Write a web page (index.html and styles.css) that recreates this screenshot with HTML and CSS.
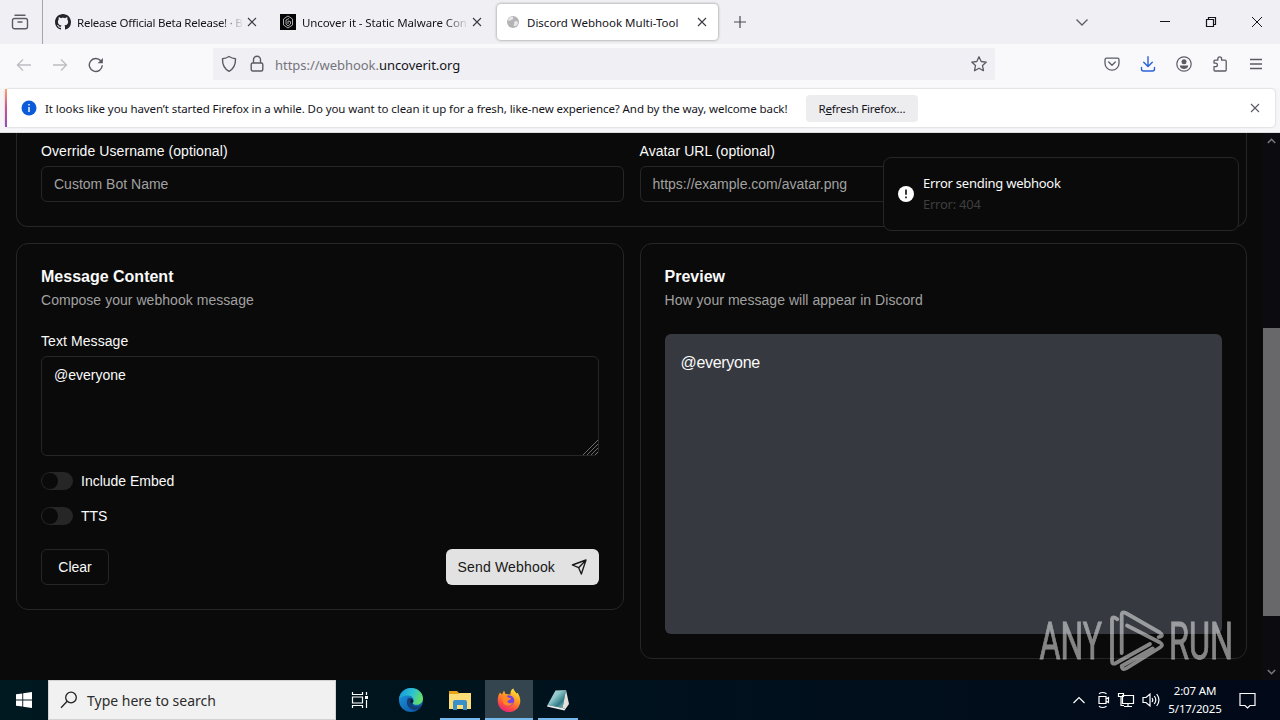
FILE: index.html
```
<!DOCTYPE html>
<html lang="en">
<head>
  <meta charset="utf-8">
  <title>Discord Webhook Multi-Tool</title>
  <link rel="stylesheet" href="styles.css">
</head>
<body>
  <!-- Tabs -->
  <div class="tab-bar">
    <div class="view-button">
      <svg width="18" height="18" viewBox="0 0 18 18" fill="none" stroke="#5b5b66" stroke-width="1.4"><path d="M4 2.2h10M3.5 5.5h11a2 2 0 0 1 2 2v6.3a2 2 0 0 1-2 2h-11a2 2 0 0 1-2-2V7.500a2 2 0 0 1 2-2zM7 9h4" stroke-linecap="round"/></svg>
    </div>
    <div class="tabs">
      <div class="tab">
        <svg width="16" height="16" viewBox="0 0 16 16" fill="#24242c"><path d="M8 0C3.580 0 0 3.580 0 8c0 3.540 2.290 6.530 5.470 7.590.4.070.550-.170.550-.380 0-.190-.010-.820-.010-1.490-2.010.370-2.530-.490-2.690-.940-.090-.230-.480-.940-.820-1.130-.280-.150-.680-.520-.010-.530.630-.010 1.080.580 1.230.820.720 1.210 1.870.870 2.330.660.070-.520.280-.870.510-1.070-1.780-.2-3.640-.890-3.640-3.950 0-.870.310-1.590.820-2.150-.080-.2-.360-1.020.080-2.120 0 0 .670-.210 2.200.820.640-.180 1.320-.270 2-.270s1.360.090 2 .270c1.530-1.040 2.200-.820 2.200-.820.440 1.100.160 1.920.080 2.120.510.560.820 1.270.820 2.150 0 3.070-1.870 3.750-3.650 3.950.290.250.540.730.540 1.480 0 1.070-.010 1.930-.010 2.200 0 .210.150.460.550.380A8 8 0 0 0 16 8c0-4.420-3.580-8-8-8z"/></svg>
        <span class="tab-title faded release-title">Release Official Beta Release! · B</span>
        <svg class="tab-close" width="10" height="10" viewBox="0 0 10 10"><path d="M1 1l8 8M9 1l-8 8"/></svg>
      </div>
      <div class="tab">
        <svg width="16" height="16" viewBox="0 0 16 16"><path fill="#050505" d="M0 0h16v16H0z"/><path d="M8 2l4.500 3v6L8 14l-4.500-3V5zM9 4.500L6 6v4l2 2 2.500-2V7.500L8 7v3" fill="none" stroke="#aaa"/></svg>
        <span class="tab-title faded">Uncover it - Static Malware Con</span>
        <svg class="tab-close" width="10" height="10" viewBox="0 0 10 10"><path d="M1 1l8 8M9 1l-8 8"/></svg>
      </div>
      <div class="tab active">
        <svg width="16" height="16" viewBox="0 0 16 16"><circle cx="8" cy="8" r="6" fill="#b4b4b6"/><path d="M3 6c1-3 4-4 5-3 1 2-1 3-2 3s-1 2-3 0zM9 8c2-2 4-1 4 1s-3 4-4 3 1-2 0-4z" fill="#e6e6e8"/></svg>
        <span class="tab-title">Discord Webhook Multi-Tool</span>
        <svg class="tab-close" width="10" height="10" viewBox="0 0 10 10"><path d="M1 1l8 8M9 1l-8 8"/></svg>
      </div>
    </div>
    <svg class="new-tab" width="12" height="12" viewBox="0 0 12 12"><path d="M6 0v12M0 6h12"/></svg>
    <div class="window-buttons">
      <svg width="14" height="14" viewBox="0 0 14 14" fill="none" stroke="#5b5b66" stroke-width="1.300"><path d="M1.500 4.500L7 10l5.500-5.500"/></svg>
      <svg class="minimize" width="12" height="12" viewBox="0 0 12 12"><path d="M1 5.500h10" stroke="#15141a"/></svg>
      <svg width="12" height="12" viewBox="0 0 12 12" fill="none" stroke="#15141a" stroke-width="1.200"><path d="M1.500 3.500h7v7h-7zM3.500 3.500v-2h7v7h-2"/></svg>
      <svg width="12" height="12" viewBox="0 0 12 12" stroke="#15141a"><path d="M1 1l10 10M11 1L1 11"/></svg>
    </div>
  </div>

  <!-- Navigation -->
  <div class="toolbar">
    <div class="nav-buttons">
      <svg width="16" height="16" viewBox="0 0 16 16" fill="none" stroke="#bcbcc2" stroke-width="1.300"><path d="M15 8H1.500M7 2.500L1.500 8 7 13.500"/></svg>
      <svg width="16" height="16" viewBox="0 0 16 16" fill="none" stroke="#bcbcc2" stroke-width="1.300"><path d="M1 8h13.500M9 2.500L14.500 8 9 13.500"/></svg>
      <svg width="16" height="16" viewBox="0 0 16 16" fill="none" stroke="#5b5b66" stroke-width="1.400"><path d="M14.300 8.300A6.500 6.500 0 1 1 12.800 3.800"/><path d="M14.900 1v5.300H9.600z" fill="#5b5b66" stroke="none"/></svg>
    </div>
    <div class="url-bar">
      <svg width="16" height="18" viewBox="0 0 16 18" fill="none" stroke="#5b5b66" stroke-width="1.400"><path d="M8 1.500c2 1.300 4.300 2 6.500 2.200C14.700 9.500 13 13.500 8 16.300 3 13.500 1.300 9.500 1.500 3.700 3.700 3.500 6 2.800 8 1.500z" stroke-linejoin="round"/></svg>
      <svg class="lock" width="14" height="18" viewBox="0 0 14 18" fill="none" stroke="#5b5b66" stroke-width="1.400"><rect x="1.200" y="8" width="11.600" height="8" rx="1.500"/><path d="M3.500 8V4.700a3.500 3.500 0 0 1 7 0V8"/></svg>
      <span class="url">https://webhook.<b>uncoverit.org</b></span>
      <svg class="star" width="18" height="18" viewBox="0 0 18 18" fill="none" stroke="#5b5b66" stroke-width="1.300" stroke-linejoin="round"><path d="M9 1.800l2.200 4.700 5.100.6-3.800 3.500 1 5.100L9 13.200l-4.500 2.500 1-5.100L1.700 7.100l5.100-.6z"/></svg>
    </div>
    <div class="toolbar-icons">
      <svg width="16" height="16" viewBox="0 0 16 16" fill="none" stroke="#5b5b66" stroke-width="1.300" stroke-linecap="round" stroke-linejoin="round"><path d="M2.500 2.200h11a1.500 1.500 0 0 1 1.500 1.500v3.500a7 7 0 0 1-14 0V3.700a1.500 1.500 0 0 1 1.500-1.500zM4.700 6L8 9.200 11.300 6"/></svg>
      <svg width="16" height="16" viewBox="0 0 16 16" fill="none" stroke="#2a62d8" stroke-width="1.400" stroke-linecap="round"><path d="M8 .8v9.500M3.700 6.300L8 10.600l4.300-4.300M1.500 11.500V13a2 2 0 0 0 2 2h9a2 2 0 0 0 2-2v-1.500"/></svg>
      <svg width="16" height="16" viewBox="0 0 16 16"><circle cx="8" cy="8" r="7.200" fill="none" stroke="#5b5b66" stroke-width="1.200"/><circle cx="8" cy="5.700" r="2.500" fill="#5b5b66"/><path d="M3.700 9.500h8.600C12 12 10 13 8 13S4 12 3.700 9.500z" fill="#5b5b66"/></svg>
      <svg width="16" height="16" viewBox="0 0 16 16" fill="none" stroke="#5b5b66" stroke-width="1.300" stroke-linejoin="round"><path d="M5.800 4.200V2.800a1.900 1.900 0 0 1 3.800 0v1.400h3.600a1 1 0 0 1 1 1V14a1 1 0 0 1-1 1H3a1 1 0 0 1-1-1v-3.300h1.600a1.800 1.800 0 0 0 0-3.600H2V5.200a1 1 0 0 1 1-1z"/></svg>
      <svg width="16" height="16" viewBox="0 0 16 16" stroke="#5b5b66" stroke-width="1.300"><path d="M2 3.500h12M2 8h12M2 12.500h12"/></svg>
    </div>
  </div>

  <!-- Refresh notification -->
  <div class="notice-wrap">
    <div class="notice">
      <svg width="16" height="16" viewBox="0 0 16 16"><circle cx="8" cy="8" r="7.500" fill="#0b5bdb"/><path d="M8 7v5M8 4v1.600" stroke="#fff" stroke-width="1.400"/></svg>
      <span class="notice-text">It looks like you haven’t started Firefox in a while. Do you want to clean it up for a fresh, like-new experience? And by the way, welcome back!</span>
      <button class="refresh-button">R<u>e</u>fresh Firefox…</button>
      <svg class="notice-close" width="10" height="10" viewBox="0 0 10 10"><path d="M1 1l8 8M9 1l-8 8"/></svg>
    </div>
  </div>

  <!-- Page -->
  <div class="viewport">
    <main class="page">
      <section class="card settings">
        <div class="field">
          <label for="username">Override Username (optional)</label>
          <input id="username" type="text" placeholder="Custom Bot Name">
        </div>
        <div class="field">
          <label for="avatar">Avatar URL (optional)</label>
          <input id="avatar" type="text" placeholder="https://example.com/avatar.png">
        </div>
      </section>

      <div class="columns">
        <section class="card">
          <h2>Message Content</h2>
          <p class="description">Compose your webhook message</p>
          <div class="field message-field">
            <label for="message">Text Message</label>
            <textarea id="message">@everyone</textarea>
            <svg class="grip" width="15" height="15" viewBox="0 0 15 15" stroke="#77777c" stroke-width=".9"><path d="M0 15L15 0M4 15L15 4M8 15l7-7M12 15l3-3"/></svg>
          </div>
          <div class="switch-row"><span class="switch"></span><span>Include Embed</span></div>
          <div class="switch-row"><span class="switch"></span><span>TTS</span></div>
          <div class="actions">
            <button class="clear-button">Clear</button>
            <button class="send-button">Send Webhook
              <svg width="16" height="16" viewBox="0 0 24 24" fill="none" stroke="#171717" stroke-width="2" stroke-linejoin="round"><path d="M22.500 1.500L15.500 22.500l-4-9.500-9.500-4zM22.500 1.500L11.500 13"/></svg>
            </button>
          </div>
        </section>

        <section class="card">
          <h2>Preview</h2>
          <p class="description">How your message will appear in Discord</p>
          <div class="preview">@everyone</div>
        </section>
      </div>
    </main>

    <div class="scrollbar">
      <svg width="9" height="6" viewBox="0 0 9 6"><path d="M.8 5l3.700-3.700L8.200 5"/></svg>
      <div class="thumb"></div>
      <svg width="9" height="6" viewBox="0 0 9 6"><path d="M.8 1l3.700 3.700L8.200 1"/></svg>
    </div>

    <div class="toast">
      <svg width="16" height="16" viewBox="0 0 16 16"><circle cx="8" cy="8" r="8" fill="#fff"/><path d="M8 3.500v5.300M8 10.500v1.800" stroke="#0a0a0a" stroke-width="1.600"/></svg>
      <div>
        <div class="toast-title">Error sending webhook</div>
        <div class="toast-text">Error: 404</div>
      </div>
    </div>

    <svg class="watermark" width="210" height="68" viewBox="0 0 210 68">
      <text x="2.500" y="51" textLength="62.500" lengthAdjust="spacingAndGlyphs">ANY</text>
      <g fill="none" stroke="#fff" stroke-width="3.800" stroke-linejoin="round" stroke-linecap="round">
        <path d="M80.300 11.300Q75 7 75 12v41q0 4 4 2l34-19"/>
        <path d="M84.700 45V7q0-4 4-2l34 19.500q5 3.500-1 4.500"/>
        <path d="M90 17.500l33 17q4 2.500 0 5L90 60q-5 3-5.300-2l31-17.500"/>
      </g>
      <text x="132" y="51" textLength="64" lengthAdjust="spacingAndGlyphs">RUN</text>
    </svg>
  </div>

  <!-- Taskbar -->
  <div class="taskbar">
    <div class="start">
      <svg width="16" height="16" viewBox="0 0 16 16" fill="#fff"><path d="M0 2.300L6.300 1.400v6.100H0zM7.200 1.200L16 0v7.500H7.200zM0 8.400h6.300v6.200L0 13.700zM7.200 8.400H16V16l-8.800-1.200z"/></svg>
    </div>
    <div class="search">
      <svg width="18" height="18" viewBox="0 0 18 18" fill="none" stroke="#222" stroke-width="1.300"><circle cx="11" cy="6.500" r="5.300"/><path d="M7.200 10.300L1 16.700"/></svg>
      <span>Type here to search</span>
    </div>
    <div class="app task-view">
      <svg width="18" height="16" viewBox="0 0 18 16" fill="none" stroke="#fff" stroke-width="1.200"><path d="M1.500 0v2.500h10V0M1.500 16v-2.500h10V16M1.500 5h10v6h-10zM15.500 0v3M15.500 8v8"/><path d="M14 4h3v3h-3z" fill="#fff" stroke="none"/></svg>
    </div>
    <div class="app">
      <svg width="24" height="24" viewBox="0 0 24 24">
        <defs>
          <linearGradient id="edge-top" x1="0" y1="0" x2="1" y2=".3"><stop offset="0" stop-color="#1593d8"/><stop offset=".6" stop-color="#2bc3d2"/><stop offset="1" stop-color="#62dc6a"/></linearGradient>
          <linearGradient id="edge-bottom" x1="0" y1="0" x2="1" y2="1"><stop offset="0" stop-color="#1b9de2"/><stop offset="1" stop-color="#0c4c9c"/></linearGradient>
        </defs>
        <circle cx="12" cy="12" r="12" fill="url(#edge-bottom)"/>
        <path d="M0 11C1 4 6 0 12 0c7 0 12 5 12 10.500 0 4-3 6.300-6.500 6.300-3 0-4.500-1.300-3.500-2.600 2-3-1-6.700-5-6.700-4 0-7 1.500-9 3.500z" fill="url(#edge-top)"/>
        <path d="M9 10c-3 5 0 11 6 12 3 .3 6-2 7.500-5-4 2.500-9 1.500-9-2 1.500-1.500.5-4-1-5z" fill="#123f78"/>
        <path d="M13 15c-1 1-2-1-1.500-3 .8-1.500 2.500-.5 2.800 1 .2 1-.8 1.500-1.300 2z" fill="#04182a"/>
      </svg>
    </div>
    <div class="app running">
      <svg width="22" height="20" viewBox="0 0 22 20"><path d="M0 1h8l2 2h12v16H0z" fill="#e6a21b"/><path d="M0 4h9l2-1h11v16H0z" fill="#fcdc76"/><path d="M4 20v-8q0-2 2-2h10q2 0 2 2v8h-4v-5H8v5z" fill="#3a8fc9"/></svg>
    </div>
    <div class="app running current">
      <svg width="24" height="24" viewBox="0 0 24 24">
        <defs><linearGradient id="fox" x1=".8" y1="0" x2=".3" y2="1"><stop offset="0" stop-color="#fff044"/><stop offset=".4" stop-color="#ff9a20"/><stop offset=".75" stop-color="#ff4b45"/><stop offset="1" stop-color="#e0257c"/></linearGradient></defs>
        <path d="M3 4.500l2 2 2-4 1.500 3.500 5 .5C13 3 15 1 16.500.5c0 2 2 3 3 5l1-.8c1.500 2 2.800 5 2.800 8A11.300 11.300 0 0 1 .7 13C.7 9 1.500 6.500 3 4.500z" fill="url(#fox)"/>
        <circle cx="12" cy="12.500" r="5.200" fill="#7542e5"/>
        <path d="M5 9c2-2 5-1.500 6 .3 1 1 3 .3 3 1.200-.5 1.500-3 1.500-3.500 3 .3 2 3 2.500 5.500 1-1 4-8 4.500-10 0z" fill="#ff8a22"/>
      </svg>
    </div>
    <div class="app running notepad">
      <svg width="24" height="24" viewBox="0 0 24 24"><defs><linearGradient id="pad" x1="0" y1="0" x2="1" y2="1"><stop offset="0" stop-color="#c4e6e8"/><stop offset=".4" stop-color="#8cc5c9"/><stop offset=".7" stop-color="#2f7c86"/><stop offset="1" stop-color="#a5d0d2"/></linearGradient></defs><path d="M9.500 2.500L20 2l-3.500 18L1.500 17z" fill="url(#pad)"/><path d="M20 2l3 14-3.500 5-3-1z" fill="#e4e4dc"/><path d="M1.500 17l15 3 3 1-1 1.500-17.500-4z" fill="#e9f1f0"/></svg>
    </div>
    <div class="tray">
      <svg width="14" height="14" viewBox="0 0 14 14"><path d="M1.500 10L7 4.500 12.500 10"/></svg>
      <svg width="14" height="18" viewBox="0 0 14 18"><path d="M3 5.500h7v7H3zM10 8l2.500-1.500v5L10 10M3 2.800q3.500-2.600 7.500 0M3 15.200q3.500 2.600 7.500 0"/></svg>
      <svg class="network" width="18" height="16" viewBox="0 0 18 16"><path d="M5.500 3.500h11v8h-11zM11 11.500v3M7 14.500h8M1.500 1.500h5v3h-5zM4 4.500v9H7"/></svg>
      <svg class="volume" width="18" height="16" viewBox="0 0 18 16"><path d="M1 5.500h3l4-3.500v12l-4-3.500H1zM10 6q1.500 2 0 4M12.300 4q3 4 0 8M14.700 2q4.500 6 0 12"/></svg>
      <div class="clock"><div>2:07 AM</div><div>5/17/2025</div></div>
      <svg class="action-center" width="17" height="17" viewBox="0 0 17 17"><path d="M1 1.500h15v12h-5l-2.500 2.500L6 13.500H1z"/></svg>
    </div>
  </div>
</body>
</html>
```
FILE: styles.css
```
* {
  box-sizing: border-box;
}
body {
  margin: 0;
  width: 1280px;
  height: 720px;
  overflow: hidden;
  display: flex;
  flex-direction: column;
  background: #0a0a0a;
  font-family: "Noto Sans", "Open Sans", sans-serif;
  font-size: 12px;
  color: #15141a;
}
svg {
  display: block;
  flex-shrink: 0;
}
button {
  border: none;
  padding: 0;
  font: inherit;
}

/* tabs */
.tab-bar {
  height: 44px;
  display: flex;
  align-items: center;
  background: #f0f0f4;
}
.view-button {
  width: 43px;
  height: 44px;
  padding: 13px 0 0 11px;
  border-right: 1px solid #a5a5ad;
}
.tabs {
  display: flex;
  gap: 4px;
  margin-left: 4px;
}
.tab {
  width: 221px;
  height: 36px;
  padding: 0 11px 0 8px;
  display: flex;
  align-items: center;
  border-radius: 4px;
}
.tab.active {
  background: #fff;
  box-shadow: 0 0 3px rgba(0, 0, 0, 0.45);
}
.tab-title {
  flex: 1;
  margin: 0 3px 0 6px;
  white-space: nowrap;
  overflow: hidden;
  font-size: 11.5px;
}
.tab-title.faded {
  letter-spacing: -0.1px;
  mask-image: linear-gradient(to left, transparent, #000 24px);
}
.tab-title.release-title {
  letter-spacing: -0.25px;
}
.tab-close,
.notice-close {
  stroke: #3a3944;
  stroke-width: 1.1;
}
.new-tab {
  margin-left: 16px;
  stroke: #4a4a55;
  stroke-width: 1.2;
}
.window-buttons {
  display: flex;
  align-items: center;
  margin-left: auto;
  margin-right: 17px;
  gap: 34px;
}
.minimize {
  margin-left: 36px;
}

/* toolbar */
.toolbar {
  height: 44px;
  display: flex;
  align-items: center;
  background: #f9f9fb;
  padding-bottom: 4px;
}
.nav-buttons {
  width: 213px;
  display: flex;
  gap: 20px;
  padding: 1px 0 0 16px;
}
.url-bar {
  width: 782px;
  height: 32px;
  display: flex;
  align-items: center;
  padding: 0 7px 0 8px;
  background: #f0f0f4;
  border-radius: 2px;
}
.lock {
  margin-left: 13px;
}
.url {
  flex: 1;
  margin-left: 11px;
  padding-top: 2px;
  font-size: 13px;
  letter-spacing: -0.04px;
  color: #74747c;
}
.url b {
  font-weight: 400;
  color: #15141a;
}
.toolbar-icons {
  display: flex;
  gap: 20px;
  margin-left: auto;
  margin-right: 16px;
}

/* notification */
.notice-wrap {
  height: 45px;
  padding: 1px 5px 6px;
  background: #f6f6f8;
  border-bottom: 1px solid #dcdce0;
}
.notice {
  position: relative;
  height: 38px;
  display: flex;
  align-items: center;
  padding: 0 15px 0 16px;
  background: #fff;
  border-radius: 4px;
  box-shadow: 0 0 2px rgba(0, 0, 0, 0.25);
}
.notice::before {
  content: '';
  position: absolute;
  left: 0;
  top: 0;
  bottom: 0;
  width: 2px;
  background: linear-gradient(#ffa266, #d0508f 50%, #8a4fc0);
}
.notice-text {
  width: 742px;
  margin-left: 8px;
  white-space: nowrap;
  font-size: 11.5px;
  letter-spacing: -0.09px;
}
.refresh-button {
  width: 112px;
  height: 27px;
  margin-left: 19px;
  background: #ededf0;
  border-radius: 4px;
  font-size: 11.5px;
  letter-spacing: -0.2px;
  color: #15141a;
}
.notice-close {
  margin-left: auto;
  stroke: #5b5b66;
}

/* page */
.viewport {
  position: relative;
  height: 547px;
  display: flex;
  overflow: hidden;
  background: #0a0a0a;
  font-family: "Liberation Sans", Arial, sans-serif;
  font-size: 14px;
  color: #fafafa;
}
.page {
  width: 1263px;
  padding: 0 16px;
}
.card {
  border: 1px solid #262626;
  border-radius: 12px;
  padding: 24px;
}
.settings {
  height: 94px;
  padding-top: 11px;
  border-top: none;
  border-radius: 0 0 12px 12px;
  display: grid;
  grid-template-columns: 1fr 1fr;
  gap: 16px;
}
.columns {
  display: grid;
  grid-template-columns: 1fr 1fr;
  align-items: start;
  gap: 16px;
  margin-top: 16px;
}
label {
  display: block;
  line-height: 14px;
  margin-bottom: 8px;
  letter-spacing: 0.08px;
}
input,
textarea {
  display: block;
  width: 100%;
  height: 36px;
  padding: 0 12px;
  background: transparent;
  border: 1px solid #262626;
  border-radius: 6px;
  font: inherit;
  color: #fafafa;
}
input::placeholder {
  color: #a1a1a1;
}
h2 {
  margin: 0;
  padding-top: 1px;
  font-size: 16px;
  line-height: 16px;
}
.description {
  margin: 5px 0 24px;
  line-height: 20px;
  letter-spacing: 0.04px;
  color: #a1a1a1;
}
.message-field {
  position: relative;
}
textarea {
  height: 100px;
  padding: 8px 12px;
  line-height: 20px;
  resize: none;
}
.grip {
  position: absolute;
  right: 1px;
  bottom: 1px;
}
.switch-row {
  display: flex;
  align-items: center;
  gap: 8px;
  height: 18.4px;
  margin-top: 16px;
}
.switch {
  width: 32px;
  height: 18px;
  padding: 1px;
  border-radius: 9px;
  background: #262626;
}
.switch::before {
  content: '';
  display: block;
  width: 16px;
  height: 16px;
  border-radius: 50%;
  background: #0a0a0a;
}
.actions {
  display: flex;
  justify-content: space-between;
  margin-top: 24px;
}
.clear-button {
  width: 68px;
  height: 36px;
  background: #0a0a0a;
  border: 1px solid #262626;
  border-radius: 6px;
  color: #fafafa;
}
.send-button {
  width: 153px;
  height: 36px;
  padding: 0 12px;
  display: flex;
  align-items: center;
  justify-content: space-between;
  background: #e2e2e2;
  border-radius: 6px;
  letter-spacing: 0.17px;
  color: #171717;
}
.preview {
  height: 300px;
  padding: 17px 16px;
  background: #36393f;
  border-radius: 6px;
  font-size: 16px;
  line-height: 24px;
  letter-spacing: -0.3px;
}

.scrollbar {
  width: 17px;
  display: flex;
  flex-direction: column;
  align-items: center;
  justify-content: space-between;
  padding: 5px 0;
  background: #0c0b10;
}
.scrollbar svg {
  fill: none;
  stroke: #77777b;
  stroke-width: 1.6;
}
.thumb {
  width: 17px;
  height: 288px;
  margin-top: 179px;
  margin-bottom: 48px;
  background: #68686a;
}

.toast {
  position: absolute;
  left: 883px;
  top: 24px;
  width: 356px;
  height: 74px;
  display: flex;
  align-items: center;
  gap: 9px;
  padding: 0 14px;
  background: #0a0a0a;
  border: 1px solid #262626;
  border-radius: 8px;
  font-family: "Noto Sans", "Open Sans", sans-serif;
  font-size: 13px;
  line-height: 21px;
  letter-spacing: -0.25px;
}
.toast-text {
  color: #3f3f3f;
}

.watermark {
  position: absolute;
  left: 1037px;
  top: 475px;
  opacity: 0.5;
  fill: #fff;
  font-family: Roboto, sans-serif;
  font-size: 51px;
  font-weight: 400;
}
.watermark text {
  stroke: #fff;
  stroke-width: 0.9;
}

/* taskbar */
.taskbar {
  height: 40px;
  display: flex;
  background: linear-gradient(90deg, #001820, #00121d 50%, #020919);
}
.start {
  width: 48px;
  display: flex;
  align-items: center;
  justify-content: center;
}
.search {
  width: 288px;
  display: flex;
  align-items: center;
  gap: 9px;
  padding-left: 11px;
  background: #f1f1f1;
  border: 1px solid #d2d2d2;
  font-size: 14px;
  color: #2c2c2c;
}
.app {
  width: 48px;
  margin-right: 1px;
  display: flex;
  align-items: center;
  justify-content: center;
}
.task-view {
  margin-right: 3px;
}
.running {
  background: linear-gradient(#76b9ed, #76b9ed) bottom / 40px 2px no-repeat;
}
.current {
  background: linear-gradient(#76b9ed, #76b9ed) bottom / 48px 2px no-repeat #34454f;
}
.tray {
  display: flex;
  align-items: center;
  margin-left: auto;
  padding-right: 24px;
  color: #fff;
}
.tray svg {
  fill: none;
  stroke: #fff;
  stroke-width: 1.2;
}
.tray svg + svg {
  margin-left: 10px;
}
.tray .network,
.tray .volume {
  margin-left: 7px;
}
.clock {
  width: 70px;
  margin: 0 9px 0 0;
  text-align: center;
  font-size: 11.5px;
  line-height: 18px;
  letter-spacing: -0.15px;
}
```
